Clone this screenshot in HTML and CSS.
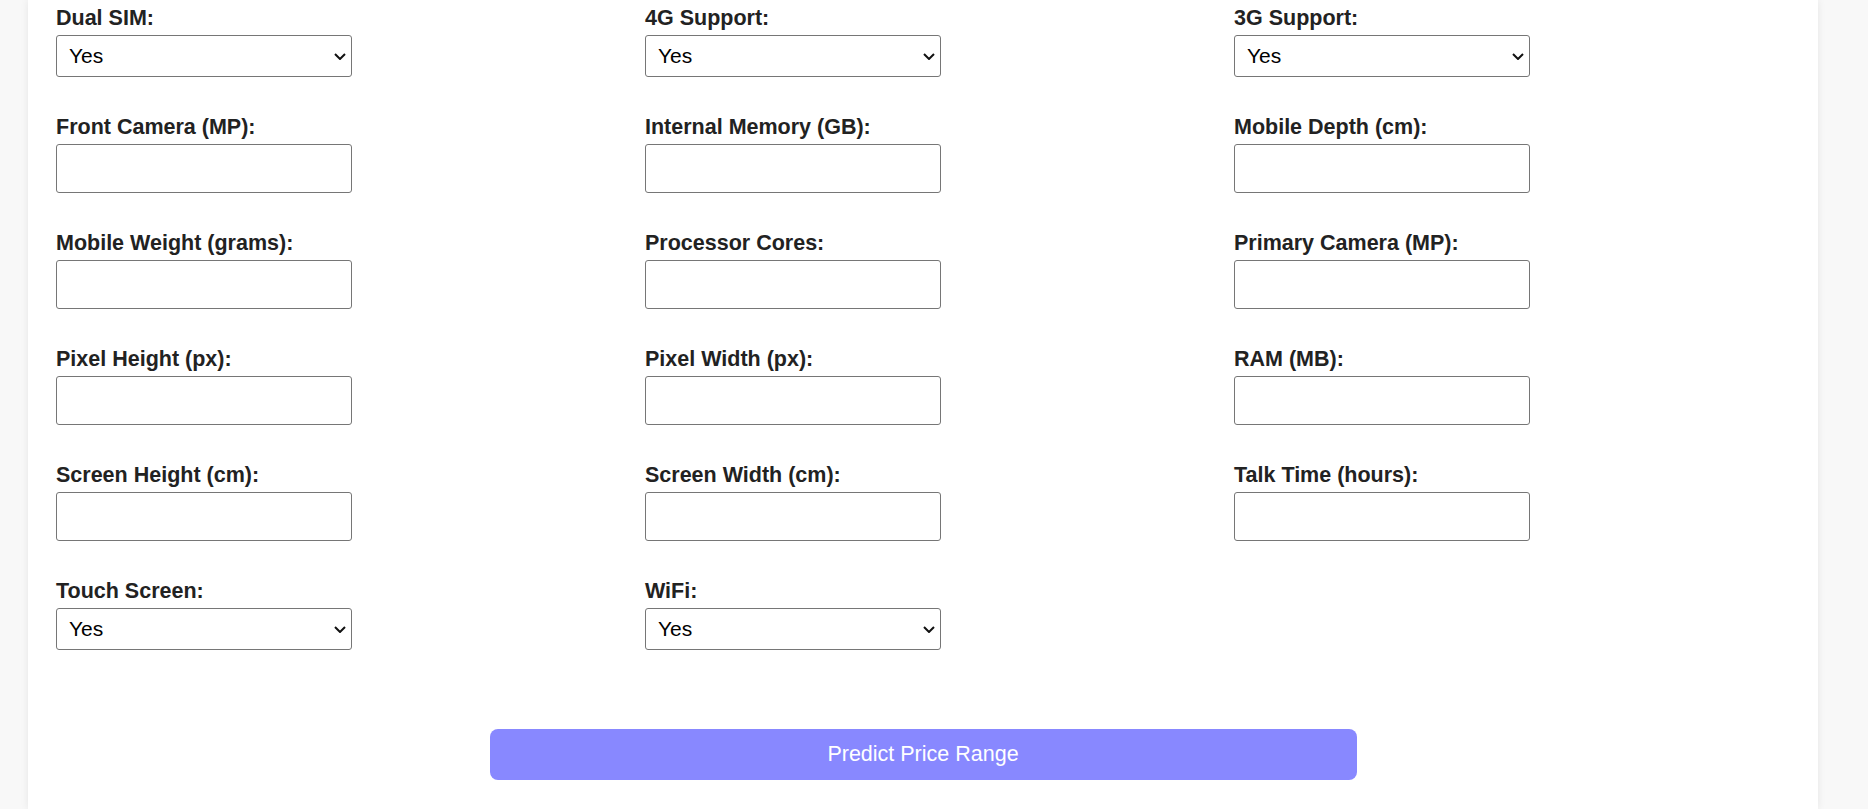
FILE: index.html
```html
<!DOCTYPE html>
<html lang="en">
<head>
<meta charset="utf-8">
<title>Mobile Price Prediction</title>
<link rel="stylesheet" href="styles.css">
</head>
<body>
<div class="card">
  <form class="form">
    <div class="grid">
      <div class="field">
        <label class="label">Dual SIM:</label>
        <div class="select-wrap">
          <select class="select"><option>Yes</option><option>No</option></select>
          <svg class="chev" width="12" height="7" viewBox="0 0 12 7"><path d="M1 1l5 5 5-5" fill="none" stroke="#111" stroke-width="2"/></svg>
        </div>
      </div>
      <div class="field">
        <label class="label">4G Support:</label>
        <div class="select-wrap">
          <select class="select"><option>Yes</option><option>No</option></select>
          <svg class="chev" width="12" height="7" viewBox="0 0 12 7"><path d="M1 1l5 5 5-5" fill="none" stroke="#111" stroke-width="2"/></svg>
        </div>
      </div>
      <div class="field">
        <label class="label">3G Support:</label>
        <div class="select-wrap">
          <select class="select"><option>Yes</option><option>No</option></select>
          <svg class="chev" width="12" height="7" viewBox="0 0 12 7"><path d="M1 1l5 5 5-5" fill="none" stroke="#111" stroke-width="2"/></svg>
        </div>
      </div>

      <div class="field">
        <label class="label">Front Camera (MP):</label>
        <input class="input" type="number">
      </div>
      <div class="field">
        <label class="label">Internal Memory (GB):</label>
        <input class="input" type="number">
      </div>
      <div class="field">
        <label class="label">Mobile Depth (cm):</label>
        <input class="input" type="number">
      </div>

      <div class="field">
        <label class="label">Mobile Weight (grams):</label>
        <input class="input" type="number">
      </div>
      <div class="field">
        <label class="label">Processor Cores:</label>
        <input class="input" type="number">
      </div>
      <div class="field">
        <label class="label">Primary Camera (MP):</label>
        <input class="input" type="number">
      </div>

      <div class="field">
        <label class="label">Pixel Height (px):</label>
        <input class="input" type="number">
      </div>
      <div class="field">
        <label class="label">Pixel Width (px):</label>
        <input class="input" type="number">
      </div>
      <div class="field">
        <label class="label">RAM (MB):</label>
        <input class="input" type="number">
      </div>

      <div class="field">
        <label class="label">Screen Height (cm):</label>
        <input class="input" type="number">
      </div>
      <div class="field">
        <label class="label">Screen Width (cm):</label>
        <input class="input" type="number">
      </div>
      <div class="field">
        <label class="label">Talk Time (hours):</label>
        <input class="input" type="number">
      </div>

      <div class="field">
        <label class="label">Touch Screen:</label>
        <div class="select-wrap">
          <select class="select"><option>Yes</option><option>No</option></select>
          <svg class="chev" width="12" height="7" viewBox="0 0 12 7"><path d="M1 1l5 5 5-5" fill="none" stroke="#111" stroke-width="2"/></svg>
        </div>
      </div>
      <div class="field">
        <label class="label">WiFi:</label>
        <div class="select-wrap">
          <select class="select"><option>Yes</option><option>No</option></select>
          <svg class="chev" width="12" height="7" viewBox="0 0 12 7"><path d="M1 1l5 5 5-5" fill="none" stroke="#111" stroke-width="2"/></svg>
        </div>
      </div>
    </div>
    <div class="actions">
      <button class="btn" type="button">Predict Price Range</button>
    </div>
  </form>
</div>
</body>
</html>
```
FILE: styles.css
```css
html, body {
  margin: 0;
  padding: 0;
  height: 809px;
  overflow: hidden;
}
body {
  background: #f8f8f8;
  font-family: "Liberation Sans", Arial, sans-serif;
}
.card {
  margin-left: 28px;
  width: 1790px;
  box-sizing: border-box;
  padding: 4.5px 28px 0;
  height: 809px;
  background: #fff;
  box-shadow: 0 0 8px rgba(0, 0, 0, 0.08);
}
.grid {
  display: grid;
  grid-template-columns: repeat(3, 1fr);
  column-gap: 33px;
  row-gap: 37px;
}
.field {
  display: flex;
  flex-direction: column;
  align-items: flex-start;
}
.label {
  display: block;
  font-weight: bold;
  font-size: 21.5px;
  line-height: 26px;
  color: #222;
  margin-bottom: 4px;
}
.select-wrap {
  position: relative;
  width: 296px;
  height: 42px;
}
.select {
  -webkit-appearance: none;
  appearance: none;
  box-sizing: border-box;
  width: 296px;
  height: 42px;
  margin: 0;
  padding: 0 30px 0 12px;
  border: 1px solid #767676;
  border-radius: 3px;
  background: #fff;
  color: #000;
  font-family: "Liberation Sans", Arial, sans-serif;
  font-size: 21px;
}
.chev {
  position: absolute;
  right: 6px;
  top: 18px;
  pointer-events: none;
}
.input {
  box-sizing: border-box;
  width: 296px;
  height: 49px;
  margin: 0;
  padding: 0 10px;
  border: 1px solid #767676;
  border-radius: 3px;
  background: #fff;
  font-family: "Liberation Sans", Arial, sans-serif;
  font-size: 20px;
}
.actions {
  display: flex;
  justify-content: center;
  margin-top: 79px;
}
.btn {
  width: 50%;
  height: 51px;
  border: none;
  border-radius: 8px;
  background: #8888ff;
  color: #fff;
  font-family: "Liberation Sans", Arial, sans-serif;
  font-size: 21.5px;
  cursor: pointer;
}
```
